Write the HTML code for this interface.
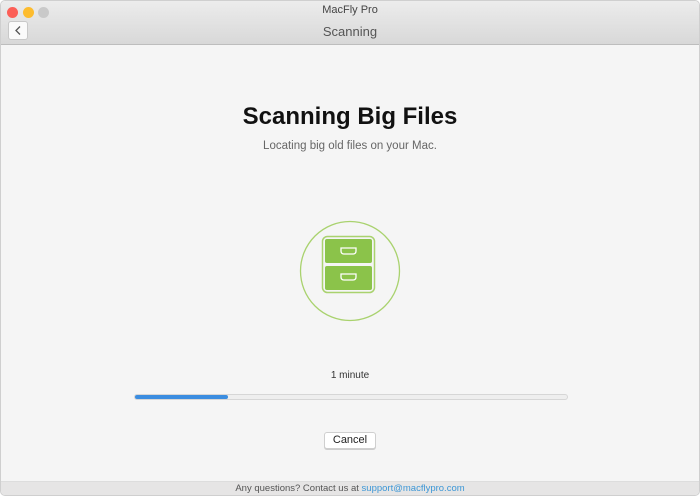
<!DOCTYPE html>
<html><head><style>
html,body{margin:0;padding:0;width:700px;height:496px;overflow:hidden;background:#fff;font-family:"Liberation Sans",sans-serif}
.win{position:absolute;left:0;top:0;width:698px;height:494px;border:1px solid #cfcfcf;border-radius:5px;overflow:hidden;background:#f5f5f5}
.tb{position:absolute;left:0;top:0;width:698px;height:43px;background:linear-gradient(#ececec,#d8d8d8);border-bottom:1px solid #bdbdbd}
.dot{position:absolute;top:6px;width:11px;height:11px;border-radius:50%}
.t1{position:absolute;top:3px;width:100%;text-align:center;font-size:11px;color:#444}
.t2{position:absolute;top:23px;width:100%;text-align:center;font-size:13px;color:#555}
.back{position:absolute;left:7px;top:20px;width:18px;height:17px;background:#fafafa;border:1px solid #c8c8c8;border-radius:3px}
h1{position:absolute;top:102px;width:100%;margin:0;text-align:center;font-size:24px;font-weight:bold;color:#111}
.sub{position:absolute;top:139px;width:100%;text-align:center;font-size:11.5px;color:#666}
.min{position:absolute;top:369px;width:100%;text-align:center;font-size:10px;color:#333}
.bar{position:absolute;left:133px;top:393px;width:432px;height:4px;border:1px solid #d6d6d6;border-radius:3px;background:#eee}
.fill{width:93px;height:4px;background:#3b8de0;border-radius:2px}
.btn{position:absolute;left:323px;top:431px;width:50px;height:15px;background:#fff;border:1px solid #cfcfcf;border-radius:3px;font-size:11px;text-align:center;line-height:15px;color:#222;box-shadow:0 1px 0 #ccc}
.foot{position:absolute;left:0;top:480px;width:698px;height:14px;background:#e6e5e5;border-top:1px solid #ddd;font-size:9.5px;color:#555;text-align:center;line-height:14px}
.foot span{color:#3d97d6}
</style></head><body>
<div class="win">
<div class="tb">
<div class="dot" style="left:6px;background:#fc5f57"></div>
<div class="dot" style="left:22px;background:#fdbc2e"></div>
<div class="dot" style="left:37px;background:#c9c9c9"></div>
<div class="t1">MacFly Pro</div>
<div class="t2">Scanning</div>
<div class="back"><svg width="18" height="17"><path d="M11 4.5 L7 8.5 L11 12.5" fill="none" stroke="#555" stroke-width="1.3"/></svg></div>
</div>
<h1>Scanning Big Files</h1>
<div class="sub">Locating big old files on your Mac.</div>
<svg style="position:absolute;left:298px;top:219px" width="102" height="102">
<circle cx="51" cy="51" r="49.5" fill="none" stroke="#a9d26e" stroke-width="1.3"/>
<rect x="23.5" y="16.5" width="52" height="56" rx="5" fill="none" stroke="#a9d26e" stroke-width="1.5"/>
<rect x="26" y="19" width="47" height="24" rx="2" fill="#8bc34a"/>
<rect x="26" y="46" width="47" height="24" rx="2" fill="#8bc34a"/>
<path d="M42 28 h15 v3 q0 3 -3 3 h-9 q-3 0 -3 -3z" fill="none" stroke="#fff" stroke-width="1.3"/>
<path d="M42 54 h15 v3 q0 3 -3 3 h-9 q-3 0 -3 -3z" fill="none" stroke="#fff" stroke-width="1.3"/>
</svg>
<div class="min">1 minute</div>
<div class="bar"><div class="fill"></div></div>
<div class="btn">Cancel</div>
<div class="foot">Any questions? Contact us at <span>support@macflypro.com</span></div>
</div>
</body></html>
